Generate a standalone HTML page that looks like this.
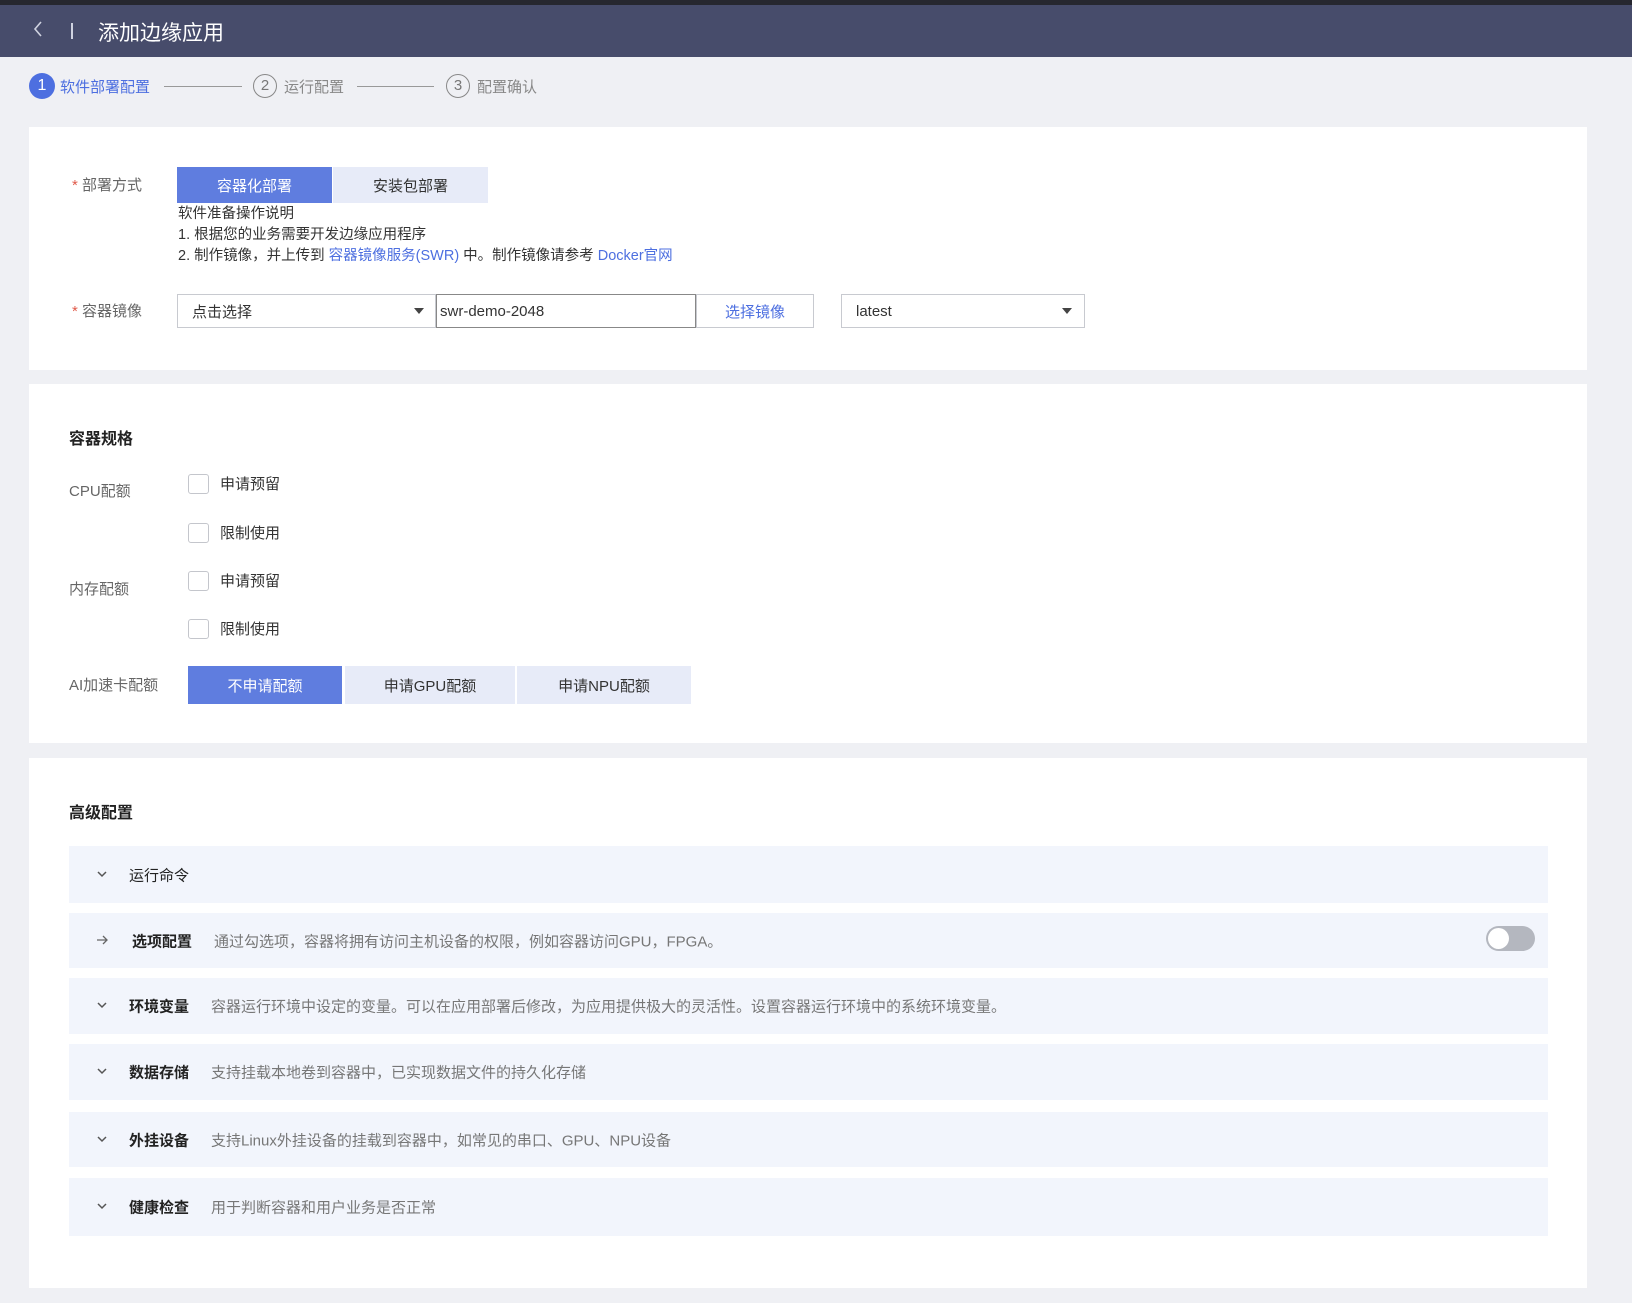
<!DOCTYPE html>
<html><head><meta charset="utf-8"><style>
*{box-sizing:border-box;margin:0;padding:0}
body{width:1632px;height:1303px;background:#eff0f4;font-family:"Liberation Sans","Noto Sans CJK SC",sans-serif;color:#333;font-size:14px;position:relative;overflow:hidden}
.a{position:absolute;white-space:nowrap}
.card{position:absolute;left:29px;width:1558px;background:#fff}
.row{position:absolute;left:69px;width:1479px;background:#f2f5fc}
.row .chev{position:absolute;left:28px;top:50%;margin-top:-6px;width:10px;height:10px}
.row .t{position:absolute;left:60px;top:50%;transform:translateY(-50%);font-size:15px;color:#222;font-weight:bold}
.row .d{position:absolute;left:142px;top:50%;transform:translateY(-50%);font-size:15px;color:#777}
.cb{position:absolute;left:188px;width:21px;height:20px;border:1.5px solid #c4c6cc;border-radius:3px;background:#fff}
.cbt{position:absolute;left:220px;font-size:15px;color:#333}
.lbl{position:absolute;left:69px;font-size:15px;color:#666}
.btn{position:absolute;display:flex;align-items:center;justify-content:center;font-size:15px;background:#e7ebf8;color:#333}
.on{background:#5f7ddf;color:#fff}
.box{position:absolute;border:1px solid #c8cad0;background:#fff;font-size:15px;display:flex;align-items:center}
.tri{position:absolute;width:0;height:0;border-left:5px solid transparent;border-right:5px solid transparent;border-top:6px solid #444}
</style></head><body>
<div class="a" style="left:0;top:0;width:1632px;height:5px;background:#26272f"></div>
<div class="a" style="left:0;top:5px;width:1632px;height:52px;background:#474c6b"></div>
<svg class="a" style="left:33px;top:21px" width="10" height="16"><path d="M8 1 L2 8 L8 15" stroke="#cfd2e0" stroke-width="1.6" fill="none"/></svg>
<div class="a" style="left:71px;top:23px;width:2px;height:16px;background:#cfd2e0"></div>
<div class="a" style="left:98px;top:17px;font-size:21px;color:#fff">添加边缘应用</div>

<div class="a" style="left:29px;top:73px;width:26px;height:26px;border-radius:50%;background:#4d6fe0;color:#fff;font-size:16px;text-align:center;line-height:26px">1</div>
<div class="a" style="left:60px;top:76px;font-size:15px;color:#4d6fe0">软件部署配置</div>
<div class="a" style="left:164px;top:86px;width:78px;height:1px;background:#999"></div>
<div class="a" style="left:253px;top:74px;width:24px;height:24px;border-radius:50%;border:1.5px solid #888;color:#777;font-size:15px;text-align:center;line-height:21px">2</div>
<div class="a" style="left:284px;top:76px;font-size:15px;color:#888">运行配置</div>
<div class="a" style="left:357px;top:86px;width:77px;height:1px;background:#999"></div>
<div class="a" style="left:446px;top:74px;width:24px;height:24px;border-radius:50%;border:1.5px solid #888;color:#777;font-size:15px;text-align:center;line-height:21px">3</div>
<div class="a" style="left:477px;top:76px;font-size:15px;color:#888">配置确认</div>

<div class="card" style="top:127px;height:243px"></div>
<div class="a" style="left:72px;top:174px;font-size:15px;color:#666"><span style="color:#e05a4a">*</span> 部署方式</div>
<div class="btn on" style="left:177px;top:167px;width:155px;height:36px">容器化部署</div>
<div class="btn" style="left:333px;top:167px;width:155px;height:36px">安装包部署</div>
<div class="a" style="left:178px;top:204px;font-size:14.5px;line-height:21px;color:#333">软件准备操作说明<br>1. 根据您的业务需要开发边缘应用程序<br>2. 制作镜像，并上传到 <span style="color:#4d6fe0">容器镜像服务(SWR)</span> 中。制作镜像请参考 <span style="color:#4d6fe0">Docker官网</span></div>
<div class="a" style="left:72px;top:300px;font-size:15px;color:#666"><span style="color:#e05a4a">*</span> 容器镜像</div>
<div class="box" style="left:177px;top:294px;width:259px;height:34px;padding-left:14px">点击选择</div>
<div class="tri" style="left:414px;top:308px"></div>
<div class="box" style="left:436px;top:294px;width:260px;height:34px;padding-left:3px;border-color:#888">swr-demo-2048</div>
<div class="box" style="left:696px;top:294px;width:118px;height:34px;justify-content:center;color:#4d6fe0">选择镜像</div>
<div class="box" style="left:841px;top:294px;width:244px;height:34px;padding-left:14px">latest</div>
<div class="tri" style="left:1062px;top:308px"></div>

<div class="card" style="top:384px;height:359px"></div>
<div class="a" style="left:69px;top:425px;font-size:16px;font-weight:bold;color:#222">容器规格</div>
<div class="lbl" style="top:480px">CPU配额</div>
<div class="lbl" style="top:578px">内存配额</div>
<div class="lbl" style="top:674px">AI加速卡配额</div>
<div class="cb" style="top:474px"></div><div class="cbt" style="top:473px">申请预留</div>
<div class="cb" style="top:523px"></div><div class="cbt" style="top:522px">限制使用</div>
<div class="cb" style="top:571px"></div><div class="cbt" style="top:570px">申请预留</div>
<div class="cb" style="top:619px"></div><div class="cbt" style="top:618px">限制使用</div>
<div class="btn on" style="left:188px;top:666px;width:154px;height:38px">不申请配额</div>
<div class="btn" style="left:345px;top:666px;width:170px;height:38px">申请GPU配额</div>
<div class="btn" style="left:517px;top:666px;width:174px;height:38px">申请NPU配额</div>

<div class="card" style="top:758px;height:530px"></div>
<div class="a" style="left:69px;top:799px;font-size:16px;font-weight:bold;color:#222">高级配置</div>

<div class="row" style="top:846px;height:57px"><svg class="chev" viewBox="0 0 10 10"><path d="M1 3 L5 7 L9 3" stroke="#555" stroke-width="1.5" fill="none"/></svg><div class="t" style="font-weight:normal">运行命令</div></div>
<div class="row" style="top:913px;height:55px"><svg class="chev" viewBox="0 0 12 10" style="width:14px;left:26px"><path d="M1 5 H11 M7 1 L11 5 L7 9" stroke="#666" stroke-width="1.3" fill="none"/></svg><div class="t" style="left:63px">选项配置</div><div class="d" style="left:145px">通过勾选项，容器将拥有访问主机设备的权限，例如容器访问GPU，FPGA。</div>
<div style="position:absolute;left:1417px;top:13px;width:49px;height:25px;border-radius:13px;background:#b4b7bf"><div style="position:absolute;left:2px;top:2px;width:21px;height:21px;border-radius:50%;background:#fff"></div></div></div>
<div class="row" style="top:978px;height:56px"><svg class="chev" viewBox="0 0 10 10"><path d="M1 3 L5 7 L9 3" stroke="#555" stroke-width="1.5" fill="none"/></svg><div class="t">环境变量</div><div class="d">容器运行环境中设定的变量。可以在应用部署后修改，为应用提供极大的灵活性。设置容器运行环境中的系统环境变量。</div></div>
<div class="row" style="top:1044px;height:56px"><svg class="chev" viewBox="0 0 10 10"><path d="M1 3 L5 7 L9 3" stroke="#555" stroke-width="1.5" fill="none"/></svg><div class="t">数据存储</div><div class="d">支持挂载本地卷到容器中，已实现数据文件的持久化存储</div></div>
<div class="row" style="top:1112px;height:55px"><svg class="chev" viewBox="0 0 10 10"><path d="M1 3 L5 7 L9 3" stroke="#555" stroke-width="1.5" fill="none"/></svg><div class="t">外挂设备</div><div class="d">支持Linux外挂设备的挂载到容器中，如常见的串口、GPU、NPU设备</div></div>
<div class="row" style="top:1178px;height:58px"><svg class="chev" viewBox="0 0 10 10"><path d="M1 3 L5 7 L9 3" stroke="#555" stroke-width="1.5" fill="none"/></svg><div class="t">健康检查</div><div class="d">用于判断容器和用户业务是否正常</div></div>
</body></html>
